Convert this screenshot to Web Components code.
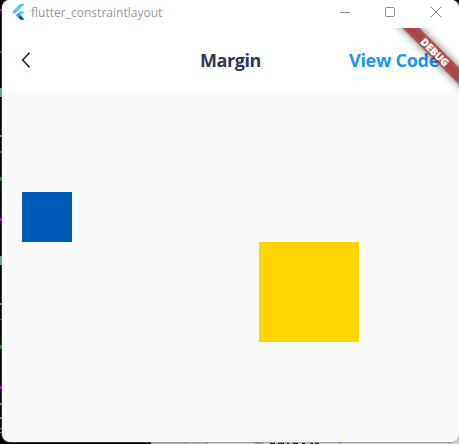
<!DOCTYPE html>
<html lang="en">
<head>
<meta charset="utf-8">
<title>flutter_constraintlayout</title>
<style>
html, body { margin: 0; height: 100%; overflow: hidden; background: #000; }
body { font-family: "Open Sans", "Noto Sans", sans-serif; }
</style>
</head>
<body>
<desk-top>
  <app-window>
    <title-bar slot="title">flutter_constraintlayout</title-bar>
    <app-bar slot="bar">Margin<span slot="action">View Code</span></app-bar>
    <color-box style="--size:50px;--fill:#005bbb;margin:100px 0 0 20px"></color-box>
    <color-box style="--size:100px;--fill:#ffd500;margin:0 0 0 257px"></color-box>
    <debug-banner slot="banner"></debug-banner>
  </app-window>
</desk-top>
<script>
function define(name, html) {
  const t = document.createElement('template');
  t.innerHTML = html;
  customElements.define(name, class extends HTMLElement {
    constructor() {
      super();
      this.attachShadow({ mode: 'open' }).append(t.content.cloneNode(true));
    }
  });
}

define('desk-top', `
<style>
:host { display: block; position: relative; box-sizing: border-box; width: 459px; height: 444px; padding: 0 0 2px 2px; background: #000; }
svg { position: absolute; left: 0; top: 0; }
</style>
<svg width="459" height="444" shape-rendering="crispEdges">
  <path fill="#b0b0b0" d="M151 430h308v14H151z"/>
  <path fill="#cfcfcf" d="M208 443h251v1H208zM452 430h7v14h-7z"/>
  <path fill="#888" d="M185 442h1v2h-1zM207 442h1v2h-1z"/><path fill="#87919a" d="M255 442h8v2h-8z"/>
  <path fill="#111" d="M270 443h5v1h-5zM278 443h6v1h-6zM287 443h2v1h-2zM293 443h5v1h-5zM302 443h3v1h-3zM310 443h3v1h-3zM315 443h4v1h-4z"/>
  <path fill="#3b5fa0" d="M340 442h1v2h-1z"/>
  <path fill="#a0a" d="M0 9h2v2H0zM0 51h2v2H0zM0 218h2v3H0zM0 386h2v3H0z"/>
  <path fill="#6aa890" d="M0 88h2v9H0zM0 256h2v9H0z"/>
  <path fill="#7387a8" d="M0 135h2v2H0zM0 303h2v2H0zM0 403h2v2H0zM0 417h2v2H0zM0 428h2v1H0zM0 432h2v1H0z"/>
  <path fill="#0a8a0a" d="M0 151h2v2H0zM0 177h2v4H0zM0 319h2v1H0zM0 345h2v4H0z"/>
</svg>
<slot></slot>`);

define('app-window', `
<style>
:host { display: flex; flex-direction: column; position: relative; height: 442px; box-sizing: border-box; overflow: hidden; background: #fafafa; border-radius: 8px; box-shadow: 0 0 0 1px #8886; }
main { flex: 1; display: flex; flex-direction: column; }
</style>
<slot name="title"></slot><slot name="bar"></slot>
<main><slot></slot></main>
<slot name="banner"></slot>`);

define('title-bar', `
<style>
:host { display: flex; align-items: center; height: 28px; flex: none; background: #fff; color: #999; font-size: 12px; }
.logo { margin: -4px 6px 0 10px; flex: none; }
.label { width: 250px; line-height: 16px; margin-top: -3px; letter-spacing: .015px; }
.ctl { margin: -4px 0 0 auto; flex: none; }
</style>
<svg class="logo" width="13" height="16" viewBox="0 0 13 16">
  <path fill="#54c5f8" d="M8 0h4.6L2.5 10.2 0 8z"/>
  <path fill="#54c5f8" d="M8 7.2h4.6L8.6 11.4 6.3 13.5 4 11.2z"/>
  <path fill="#29a5e8" d="M4 11.2l2.3-2.3 2.3 2.4-2.3 2.3z"/>
  <path fill="#01579b" d="M6.3 13.5l2.3-2.2 4 4.4H8.4z"/>
</svg>
<span class="label"><slot></slot></span>
<svg class="ctl" width="120" height="12" viewBox="0 0 120 12" fill="none" stroke="#8c8c8c">
  <path d="M1 6.5h10"/><rect x="46.5" y="1.5" width="9" height="9" rx="1"/><path d="M92 1l10 10M102 1l-10 10"/>
</svg>`);

define('app-bar', `
<style>
:host { display: grid; grid-template-columns: 1fr auto 1fr; align-items: center; height: 64px; flex: none; background: #fff; color: #303658; font-size: 18px; font-weight: 700; line-height: 24px; }
svg { margin-left: 18px; }
.title { letter-spacing: -.4px; }
.action { color: #2196f3; justify-self: end; margin-right: 20px; white-space: nowrap; letter-spacing: -.28px; }
</style>
<svg width="12" height="18" viewBox="0 0 12 18" fill="none" stroke="#2a3054" stroke-width="1.7"><path d="M9.6 1.6L2.7 9l6.9 7.4"/></svg>
<span class="title"><slot></slot></span>
<span class="action"><slot name="action"></slot></span>`);

define('color-box', `
<style>:host { display: block; width: var(--size); height: var(--size); background: var(--fill); }</style>`);

define('debug-banner', `
<style>
:host { display: block; position: absolute; top: 28px; right: 0; width: 75px; height: 75px; overflow: hidden; }
.turn { position: absolute; left: 75px; top: 0; width: 0; height: 0; transform: rotate(45deg); }
.shadow, .band { position: absolute; left: -40px; top: 28px; width: 80px; height: 12px; }
.shadow { left: -52px; width: 104px; background: #00000090; filter: blur(4px); }
.band { background: #b71c1ca0; color: #fff; text-align: center; font: 800 10.2px/12px "Open Sans", sans-serif; letter-spacing: -.1px; -webkit-text-stroke: .25px #fff; }
</style>
<div class="turn"><div class="shadow"></div><div class="band">DEBUG</div></div>`);
</script>
</body>
</html>
